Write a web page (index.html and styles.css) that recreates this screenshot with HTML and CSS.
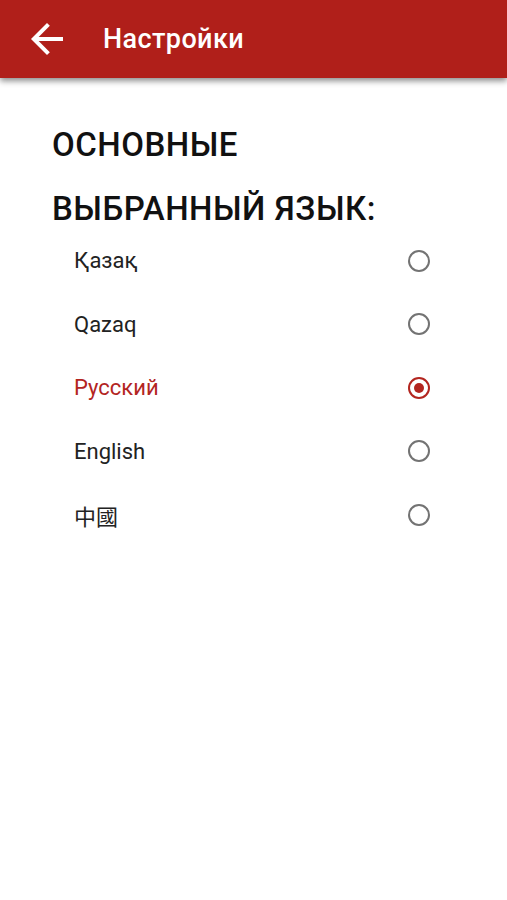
FILE: index.html
```html
<!DOCTYPE html>
<html lang="ru">
<head>
<meta charset="utf-8">
<title>Настройки</title>
<link rel="stylesheet" href="styles.css">
</head>
<body>
<header class="appbar">
  <svg class="back" viewBox="0 0 24 24" width="48" height="48"><path d="M20 11H7.83l5.59-5.59L12 4l-8 8 8 8 1.41-1.41L7.83 13H20v-2z" fill="#fff"/></svg>
  <h1 class="title">Настройки</h1>
</header>
<main class="content">
  <h2 class="section">ОСНОВНЫЕ</h2>
  <h2 class="section sub">ВЫБРАННЫЙ ЯЗЫК:</h2>
  <ul class="langs">
    <li class="lang"><span>Қазақ</span><span class="radio"></span></li>
    <li class="lang"><span>Qazaq</span><span class="radio"></span></li>
    <li class="lang selected"><span>Русский</span><span class="radio"></span></li>
    <li class="lang"><span>English</span><span class="radio"></span></li>
    <li class="lang"><span>中國</span><span class="radio"></span></li>
  </ul>
</main>
</body>
</html>
```

FILE: styles.css
```css
* { box-sizing: border-box; }
html, body { margin: 0; padding: 0; background: #fff; }
body { font-family: Roboto, "Noto Sans CJK TC", sans-serif; width: 507px; height: 900px; overflow: hidden; }
.appbar {
  height: 78px;
  background: #b01f1a;
  display: flex;
  align-items: center;
  padding-left: 23px;
  box-shadow: 0 3px 6px rgba(0,0,0,0.45);
}
.back { display: block; flex: none; }
.title {
  margin: 0 0 0 32px;
  color: #fff;
  font-size: 27px;
  font-weight: 500;
  letter-spacing: 0.4px;
}
.content { padding: 0 0 0 52px; }
.section {
  margin: 0;
  font-size: 33px;
  font-weight: 500;
  color: #111;
  line-height: 40px;
  letter-spacing: 0.5px;
  padding-top: 47px;
}
.section.sub { padding-top: 24px; }
.langs { list-style: none; margin: 0; padding: 0 0 0 22px; margin-top: 0; }
.lang {
  height: 63.5px;
  display: flex;
  align-items: center;
  justify-content: space-between;
  padding-right: 77px;
  font-size: 22px;
  color: #222;
}
.lang.selected { color: #b3251f; }
.radio {
  width: 22px;
  height: 22px;
  border: 2px solid #737373;
  border-radius: 50%;
  display: flex;
  align-items: center;
  justify-content: center;
}
.selected .radio { border-color: #b3251f; }
.selected .radio::after {
  content: "";
  width: 10px;
  height: 10px;
  border-radius: 50%;
  background: #b3251f;
}
```
